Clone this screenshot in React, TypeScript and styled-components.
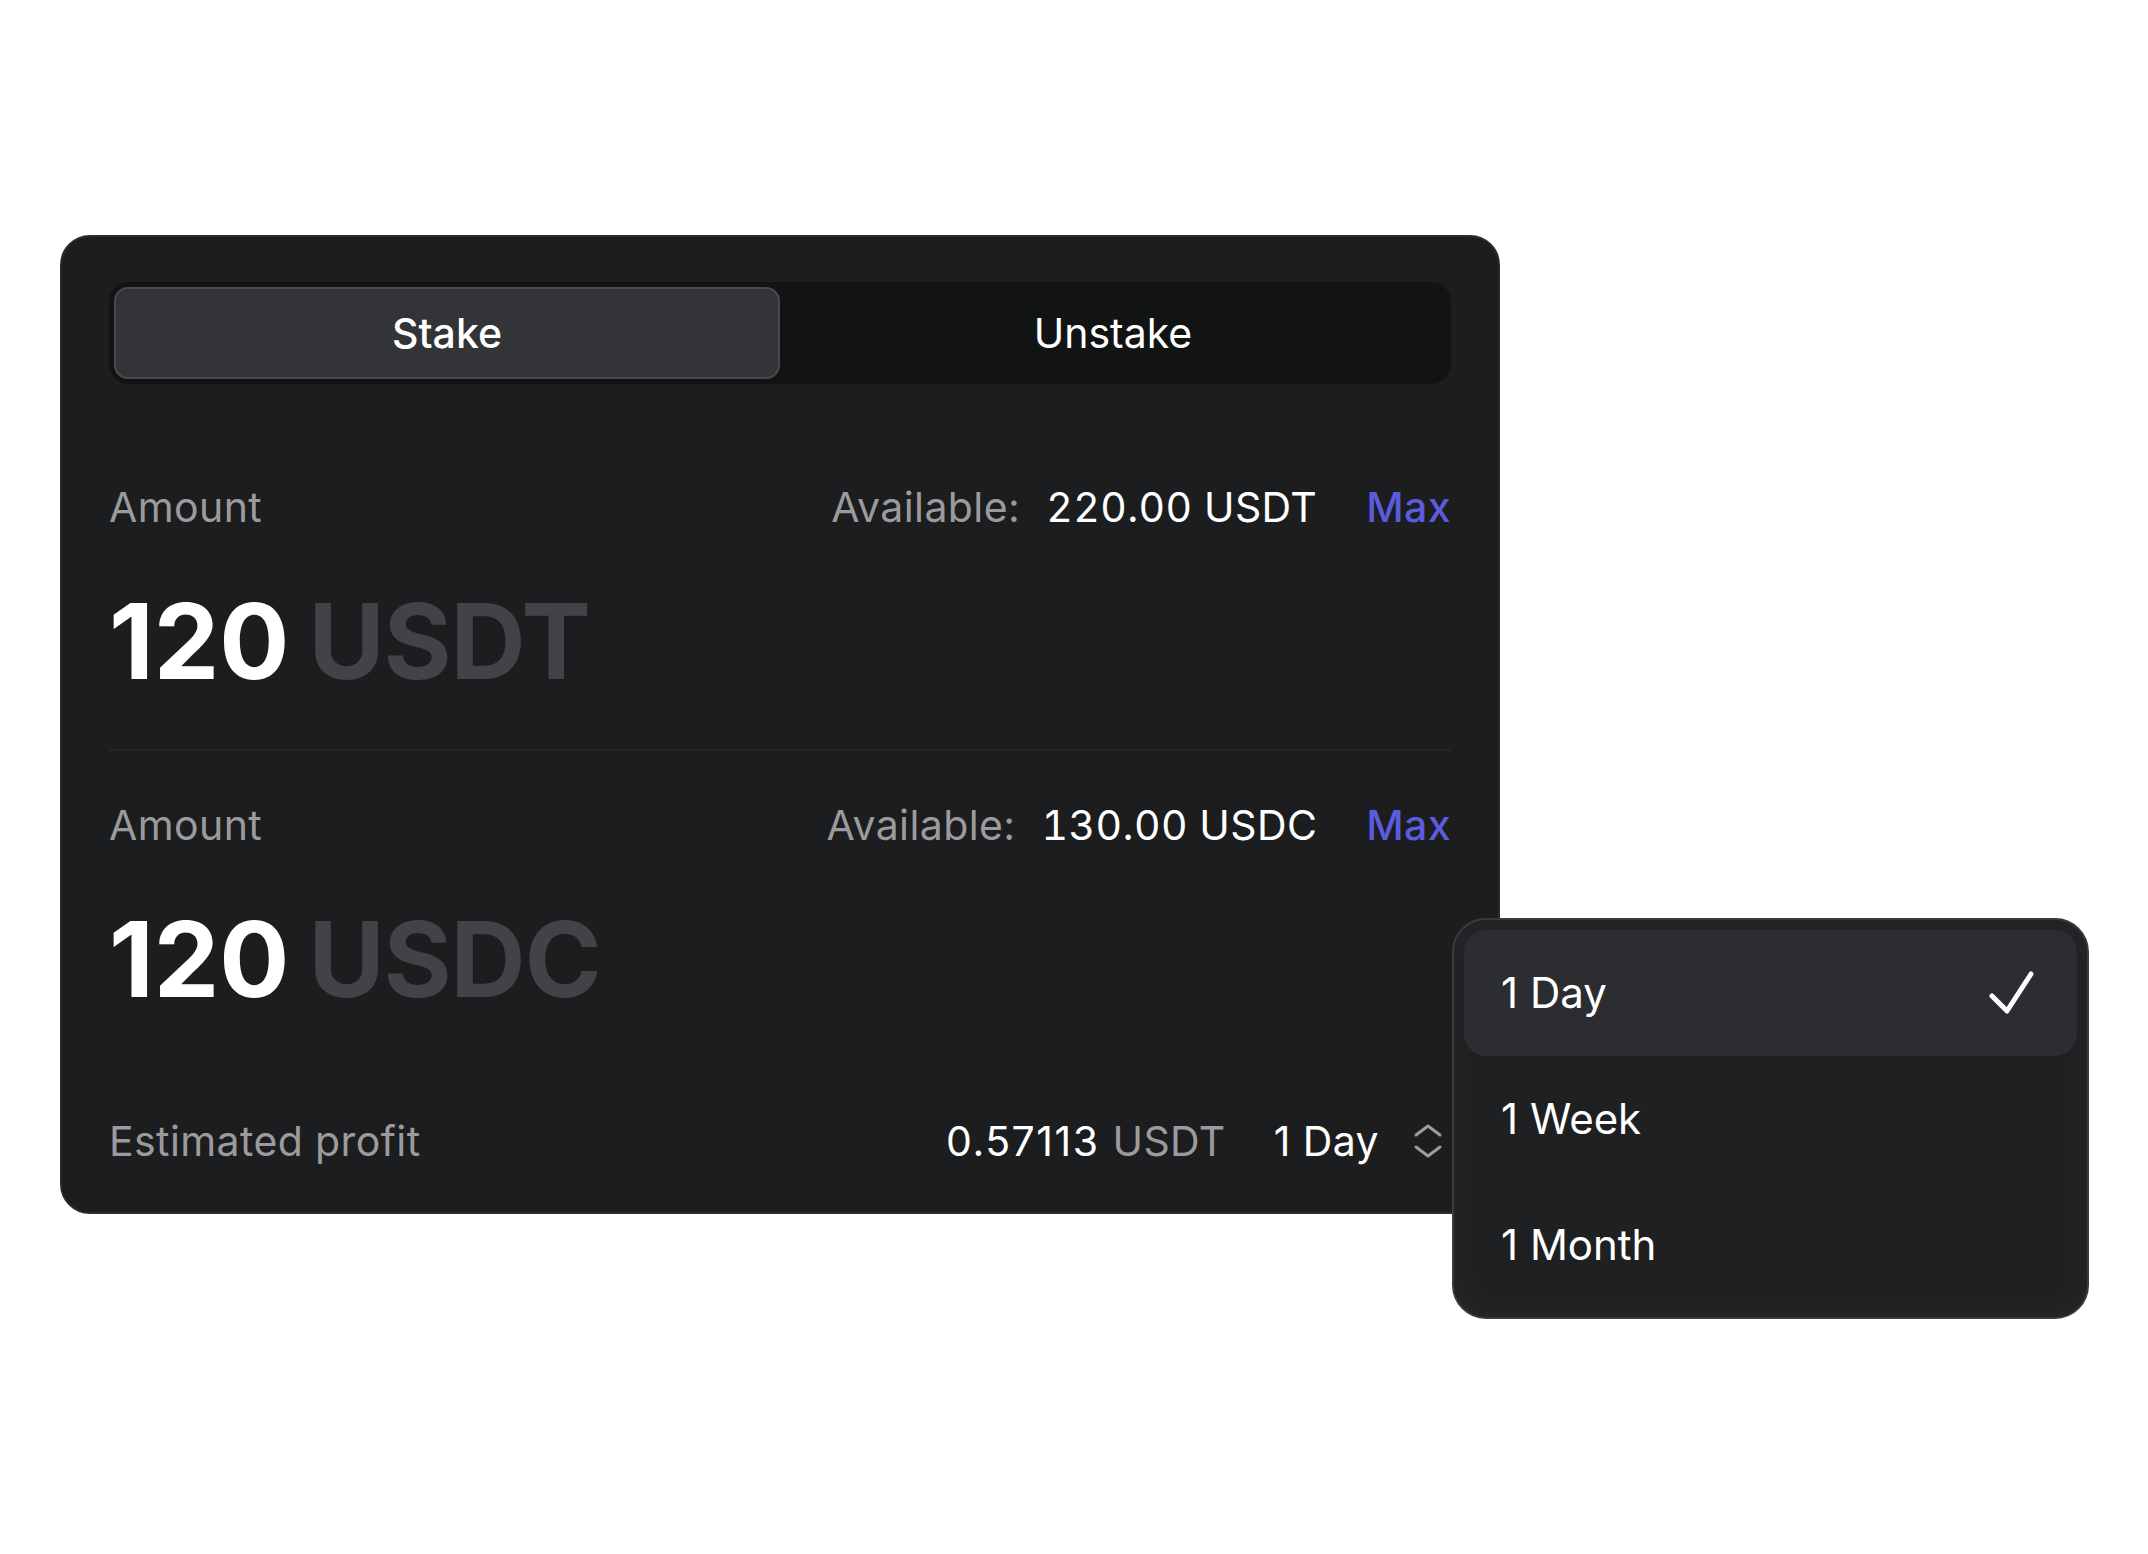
import React from 'react';
import styled, { createGlobalStyle } from 'styled-components';

const GlobalStyle = createGlobalStyle`
  * { box-sizing: border-box; }
  body {
    margin: 0;
    background: #ffffff;
    font-family: Inter, "Noto Sans", "Liberation Sans", sans-serif;
    -webkit-font-smoothing: antialiased;
  }
`;

interface AmountProps {
  available: string;
  value: string;
  unit: string;
}

const periods = ['1 Day', '1 Week', '1 Month'];

const CheckIcon = () => (
  <svg width="48" height="46" viewBox="0 0 48 46" fill="none">
    <path
      d="M4 26 L19 41 L43 4"
      stroke="#ffffff"
      strokeWidth="5"
      strokeLinecap="round"
      strokeLinejoin="round"
    />
  </svg>
);

const UpDownIcon = () => (
  <svg width="30" height="36" viewBox="0 0 30 36" fill="none">
    <path
      d="M3 12 L15 3 L27 12 M3 24 L15 33 L27 24"
      stroke="#9b9b9e"
      strokeWidth="3"
      strokeLinecap="round"
      strokeLinejoin="round"
    />
  </svg>
);

const AmountBlock = ({ available, value, unit }: AmountProps) => (
  <>
    <LabelRow>
      <Label>Amount</Label>
      <AvailableGroup>
        <Label>Available:</Label>
        <AvailableValue>{available}</AvailableValue>
        <MaxButton>Max</MaxButton>
      </AvailableGroup>
    </LabelRow>
    <BigAmount>
      <BigValue>{value}</BigValue>
      <BigUnit>{unit}</BigUnit>
    </BigAmount>
  </>
);

export default function App() {
  return (
    <>
      <GlobalStyle />
      <Page>
        <Stage>
          <Card>
            <Tabs>
              <Tab $active>Stake</Tab>
              <Tab>Unstake</Tab>
            </Tabs>
            <Section $top={99}>
              <AmountBlock available="220.00 USDT" value="120" unit="USDT" />
            </Section>
            <Divider />
            <Section $top={50}>
              <AmountBlock available="130.00 USDC" value="120" unit="USDC" />
            </Section>
            <ProfitRow>
              <Label>Estimated profit</Label>
              <ProfitGroup>
                <ProfitValue>
                  0.57113 <Muted>USDT</Muted>
                </ProfitValue>
                <PeriodSelect>
                  <span>1 Day</span>
                  <UpDownIcon />
                </PeriodSelect>
              </ProfitGroup>
            </ProfitRow>
          </Card>
          <Menu>
            {periods.map((p, i) => (
              <MenuItem key={p} $selected={i === 0}>
                <span>{p}</span>
                {i === 0 && <CheckIcon />}
              </MenuItem>
            ))}
          </Menu>
        </Stage>
      </Page>
    </>
  );
}

const Page = styled.div`
  width: 2148px;
  height: 1554px;
  padding: 235px 0 0 60px;
`;

const Stage = styled.div`
  position: relative;
  width: 1440px;
`;

const Card = styled.section`
  width: 1440px;
  background: #1c1d1f;
  border: 2px solid #2a2b2e;
  border-radius: 30px;
  padding: 45px 47px 47px;
`;

const Tabs = styled.div`
  display: grid;
  grid-template-columns: 1fr 1fr;
  height: 102px;
  padding: 5px;
  background: #121414;
  border-radius: 20px;
`;

const Tab = styled.div<{ $active?: boolean }>`
  display: flex;
  align-items: center;
  justify-content: center;
  border-radius: 14px;
  font-size: 41px;
  font-weight: ${(p) => (p.$active ? 500 : 400)};
  color: #ffffff;
  background: ${(p) => (p.$active ? '#333437' : 'transparent')};
  border: 2px solid ${(p) => (p.$active ? '#48494d' : 'transparent')};
`;

const Section = styled.div<{ $top: number }>`
  margin-top: ${(p) => p.$top}px;
`;

const LabelRow = styled.div`
  display: flex;
  justify-content: space-between;
  align-items: baseline;
  height: 48px;
  line-height: 48px;
`;

const Label = styled.span`
  font-size: 41px;
  font-weight: 400;
  letter-spacing: 0.4px;
  color: #9b9b9e;
`;

const AvailableValue = styled.span`
  font-size: 41px;
  letter-spacing: 0.4px;
  font-variant-numeric: tabular-nums;
  color: #ffffff;
  margin-left: 26px;
`;

const AvailableGroup = styled.div`
  display: flex;
  align-items: baseline;
`;

const MaxButton = styled.span`
  font-size: 41px;
  font-weight: 500;
  letter-spacing: 0.4px;
  color: #5b5bdc;
  margin-left: 49px;
`;

const BigAmount = styled.div`
  display: flex;
  align-items: baseline;
  gap: 19px;
  margin-top: 58px;
  height: 104px;
  line-height: 104px;
  font-size: 104px;
  font-weight: 700;
`;

const BigValue = styled.span`
  color: #ffffff;
`;

const BigUnit = styled.span`
  color: #424346;
  letter-spacing: -0.01em;
`;

const Divider = styled.div`
  height: 2px;
  margin-top: 56px;
  background: #252629;
`;

const ProfitRow = styled.div`
  display: flex;
  justify-content: space-between;
  align-items: center;
  margin-top: 106px;
  height: 48px;
  line-height: 48px;
`;

const ProfitGroup = styled.div`
  display: flex;
  align-items: center;
  gap: 48px;
`;

const ProfitValue = styled.span`
  font-size: 41px;
  letter-spacing: 1.5px;
  color: #ffffff;
`;

const Muted = styled.span`
  color: #9b9b9e;
  letter-spacing: 0.4px;
`;

const PeriodSelect = styled.div`
  display: flex;
  align-items: center;
  gap: 34px;
  font-size: 41px;
  letter-spacing: 0.4px;
  color: #ffffff;
  svg {
    margin-right: 8px;
  }
`;

const Menu = styled.div`
  position: absolute;
  left: 1392px;
  top: 683px;
  width: 637px;
  height: 401px;
  padding: 10px;
  background: #1f2022;
  border: 2px solid #3a3b3f;
  border-radius: 34px;
  box-shadow: inset 0 0 40px rgba(255, 255, 255, 0.035);
`;

const MenuItem = styled.div<{ $selected?: boolean }>`
  display: flex;
  align-items: center;
  justify-content: space-between;
  height: 126px;
  padding: 0 41px 0 37px;
  border-radius: 22px;
  font-size: 42px;
  line-height: 50px;
  color: #ffffff;
  background: ${(p) => (p.$selected ? '#2c2d30' : 'transparent')};
`;
